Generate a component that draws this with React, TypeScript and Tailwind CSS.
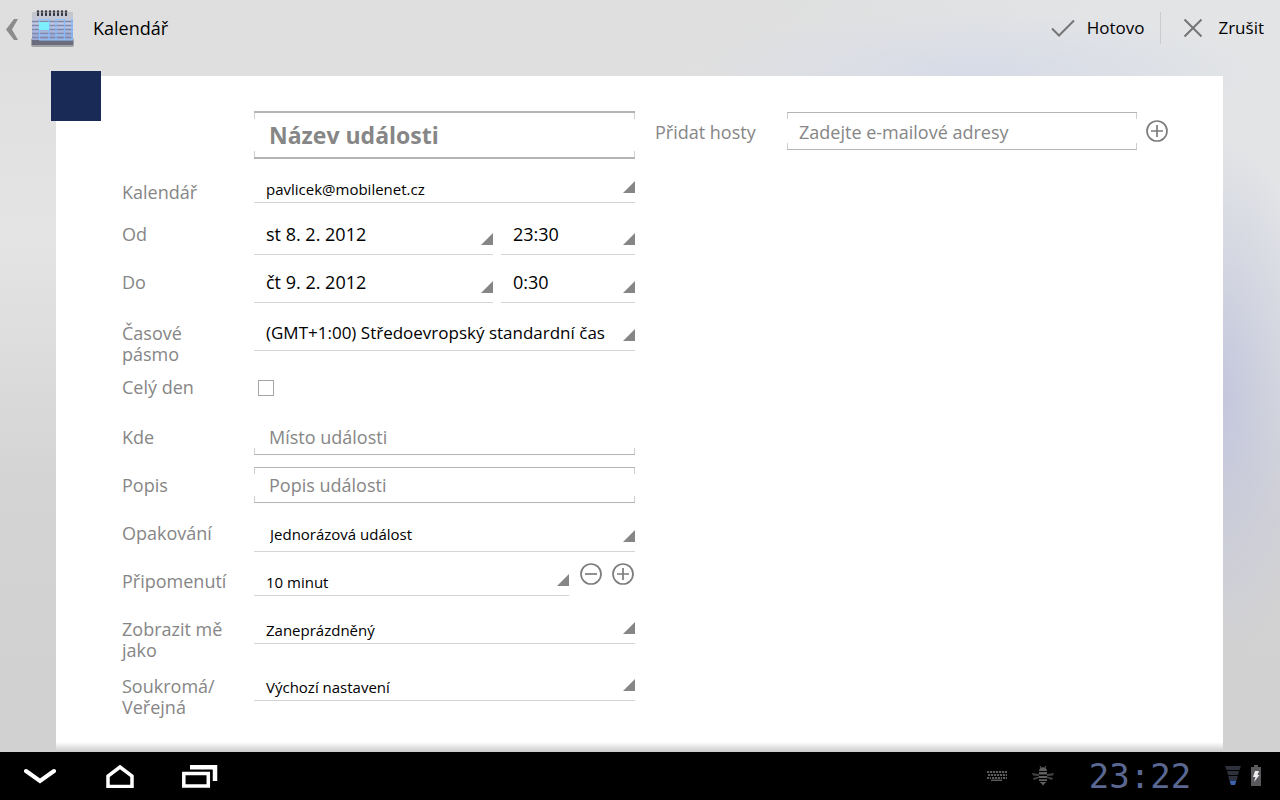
import type { ReactNode } from "react";

const Corner = () => (
    <svg className="absolute right-0 bottom-[9px] w-3 h-3 pointer-events-none" viewBox="0 0 12 12" aria-hidden="true">
        <path d="M12 0V12H0Z" fill="#868686" />
    </svg>
);

type RowProps = {
    label: string;
    htmlFor: string;
    height?: string;
    children: ReactNode;
};

const Row = ({ label, htmlFor, height = "h-12", children }: RowProps) => (
    <div className={`flex items-start ${height}`}>
        <label htmlFor={htmlFor} className="w-[132px] shrink-0 pt-2 pr-6 leading-[21px] text-[#868686]">
            {label}
        </label>
        {children}
    </div>
);

type SpinnerProps = {
    id: string;
    value: string;
    size: string;
};

const Spinner = ({ id, value, size }: SpinnerProps) => (
    <div className="relative min-w-0 flex-1 border-b border-[#d4d4d4]">
        <select id={id} className={`block w-full appearance-none bg-transparent pr-4 text-[15px] text-black outline-none ${size}`}>
            <option>{value}</option>
        </select>
        <Corner />
    </div>
);

type PickerProps = {
    id?: string;
    value: string;
    label?: string;
    className: string;
};

const Picker = ({ id, value, label, className }: PickerProps) => (
    <button id={id} type="button" aria-label={label} className={`relative border-b border-[#d4d4d4] pl-3 text-left text-black ${className}`}>
        {value}
        <Corner />
    </button>
);

type BoxProps = {
    top?: boolean;
    thick?: boolean;
    children: ReactNode;
};

const Box = ({ top = true, thick = false, children }: BoxProps) => (
    <div
        className={`relative flex-1 min-w-0 border-[#b4b4b4] ${thick ? "border-y-2" : top ? "border-y" : "border-b border-t border-t-transparent"}`}
    >
        {children}
        {top && <span className="absolute inset-x-0 top-0 h-1.5 border-x border-[#cfcfcf] pointer-events-none" />}
        <span className="absolute inset-x-0 bottom-0 h-1.5 border-x border-[#cfcfcf] pointer-events-none" />
    </div>
);

const CircleIcon = ({ plus = false }: { plus?: boolean }) => (
    <svg className="block w-[22px] h-[22px]" viewBox="0 0 22 22" fill="none" stroke="#7c7c7c" strokeWidth="1.7" aria-hidden="true">
        <circle cx="11" cy="11" r="10" />
        <path d={plus ? "M5 11H17M11 5V17" : "M5 11H17"} />
    </svg>
);

const CalendarIcon = () => (
    <svg className="w-11 h-10" viewBox="0 0 44 40" aria-hidden="true">
        <defs>
            <linearGradient id="cal-body" x1="0" y1="0" x2="0" y2="1">
                <stop offset="0" stopColor="#c4c4c8" />
                <stop offset="0.2" stopColor="#c3c8d8" />
                <stop offset="0.45" stopColor="#bccaea" />
                <stop offset="0.8" stopColor="#9aabd8" />
            </linearGradient>
        </defs>
        <rect x="0" y="30" width="43" height="9" rx="2" fill="#a2a2a6" />
        <rect x="1" y="4" width="41" height="30" rx="1" fill="url(#cal-body)" />
        <rect x="1" y="32" width="41" height="5" fill="#6a6c7e" />
        <path d="M1 13.500H42M1 17.500H42M1 21.500H42M1 25.500H42M1 29.500H42" stroke="#8287a6" strokeWidth="1.500" />
        <path d="M8.500 11V32M18 11V32M25 11V32M33.500 11V32M41 11V32" stroke="#84bcfb" strokeWidth="1.300" />
        <path d="M8 11.500H18M25 11.500H33M8 27H18M25 27H33M8 32H42" stroke="#92c8ff" strokeWidth="1.200" />
        <rect x="8" y="14" width="10" height="8" fill="#7ceefc" />
        <g fill="#3a3c4a">
            {[6, 10, 14, 18, 22, 26, 30, 34].map((x) => (
                <g key={x}>
                    <circle cx={x + 1} cy="3.500" r="1.300" />
                    <rect x={x} y="5" width="2" height="3" />
                </g>
            ))}
        </g>
    </svg>
);

const Header = () => (
    <header className="flex h-14 items-center justify-between text-black">
        <button type="button" className="flex items-center pl-[6px]">
            <svg className="w-3 h-6" viewBox="0 0 12 24" aria-hidden="true">
                <path d="M8 3H12L6 13.500L12 24H8L0 13.500Z" fill="#8b8b8b" />
            </svg>
            <span className="ml-[13px]">
                <CalendarIcon />
            </span>
            <span className="ml-[18px]">Kalendář</span>
        </button>
        <div className="flex items-center pr-4 text-[17px]">
            <button type="button" className="flex items-center gap-3 pr-4">
                <svg className="w-6 h-[18px]" viewBox="0 0 24 18" fill="none" stroke="#757575" strokeWidth="2" aria-hidden="true">
                    <path d="M1 9.500L8 16.500L23 1.500" />
                </svg>
                Hotovo
            </button>
            <button type="button" className="flex h-8 items-center gap-[15px] border-l border-[#cbcbcd] pl-[22px]">
                <svg className="w-5 h-5" viewBox="0 0 20 20" fill="none" stroke="#757575" strokeWidth="2" aria-hidden="true">
                    <path d="M1.500 1.500L18.500 18.500M18.500 1.500L1.500 18.500" />
                </svg>
                Zrušit
            </button>
        </div>
    </header>
);

const EventForm = () => (
    <form className="grid grid-cols-2 items-start gap-5 pt-[35px] pr-[55px] pb-8 pl-[66px]">
        <div>
            <div className="flex h-[63px] items-start pl-[132px]">
                <Box thick>
                    <input
                        type="text"
                        aria-label="Název události"
                        placeholder="Název události"
                        className="block h-11 w-full bg-transparent px-[15px] text-[23px] font-bold outline-none placeholder:text-[#868686]"
                    />
                </Box>
            </div>
            <Row label="Kalendář" htmlFor="calendar" height="h-[42px]">
                <Spinner id="calendar" value="pavlicek@mobilenet.cz" size="h-7 pt-0.5 pl-3" />
            </Row>
            <Row label="Od" htmlFor="from">
                <div className="flex flex-1 gap-2">
                    <Picker id="from" value="st 8. 2. 2012" className="h-[39px] flex-1 pb-0.5" />
                    <Picker value="23:30" label="Čas od 23:30" className="h-[39px] w-[134px] pb-0.5" />
                </div>
            </Row>
            <Row label="Do" htmlFor="to" height="h-[51px]">
                <div className="flex flex-1 gap-2">
                    <Picker id="to" value="čt 9. 2. 2012" className="h-[39px] flex-1 pb-0.5" />
                    <Picker value="0:30" label="Čas do 0:30" className="h-[39px] w-[134px] pb-0.5" />
                </div>
            </Row>
            <Row label="Časové pásmo" htmlFor="timezone" height="h-[54px]">
                <Picker id="timezone" value="(GMT+1:00) Středoevropský standardní čas" className="h-9 flex-1 text-[17px] whitespace-nowrap" />
            </Row>
            <Row label="Celý den" htmlFor="all-day" height="h-[50px]">
                <input id="all-day" type="checkbox" className="mt-[11px] ml-1 h-4 w-4 appearance-none border border-[#a4a4a4] bg-white checked:bg-[#868686]" />
            </Row>
            <Row label="Kde" htmlFor="where">
                <Box top={false}>
                    <input
                        id="where"
                        type="text"
                        placeholder="Místo události"
                        className="block h-[34px] w-full bg-transparent px-[15px] outline-none placeholder:text-[#868686]"
                    />
                </Box>
            </Row>
            <Row label="Popis" htmlFor="description">
                <Box>
                    <input
                        id="description"
                        type="text"
                        placeholder="Popis události"
                        className="block h-[34px] w-full bg-transparent px-[15px] outline-none placeholder:text-[#868686]"
                    />
                </Box>
            </Row>
            <Row label="Opakování" htmlFor="repeat">
                <Spinner id="repeat" value="Jednorázová událost" size="h-9 pt-0.5 pl-4" />
            </Row>
            <Row label="Připomenutí" htmlFor="reminder">
                <Spinner id="reminder" value="10 minut" size="h-8 pt-1.5 pl-3" />
                <button type="button" aria-label="Odebrat připomenutí" className="ml-[11px]">
                    <CircleIcon />
                </button>
                <button type="button" aria-label="Přidat připomenutí" className="mr-px ml-[10px]">
                    <CircleIcon plus />
                </button>
            </Row>
            <Row label="Zobrazit mě jako" htmlFor="show-as" height="h-[57px]">
                <Spinner id="show-as" value="Zaneprázdněný" size="h-8 pt-1.5 pl-3" />
            </Row>
            <Row label="Soukromá/ Veřejná" htmlFor="privacy">
                <Spinner id="privacy" value="Výchozí nastavení" size="h-8 pt-1.5 pl-3" />
            </Row>
        </div>
        <div className="flex items-center pt-px">
            <label htmlFor="guests" className="w-[132px] shrink-0 pt-0.5 text-[#868686]">
                Přidat hosty
            </label>
            <Box>
                <input
                    id="guests"
                    type="email"
                    placeholder="Zadejte e-mailové adresy"
                    className="block h-9 w-full bg-transparent px-3 pt-0.5 outline-none placeholder:text-[#868686]"
                />
            </Box>
            <button type="button" aria-label="Přidat hosta" className="ml-[9px]">
                <CircleIcon plus />
            </button>
        </div>
    </form>
);

const SystemBar = () => (
    <footer className="flex h-12 shrink-0 items-center justify-between bg-black pr-[19px] pl-6">
        <nav className="flex items-center gap-12">
            <button type="button" aria-label="Zpět">
                <svg className="block w-8 h-6" viewBox="0 0 32 24" fill="none" stroke="#fff" strokeWidth="4" aria-hidden="true">
                    <path d="M2 7L16 17L30 7" strokeLinecap="round" />
                </svg>
            </button>
            <button type="button" aria-label="Domů">
                <svg className="block w-[30px] h-6" viewBox="0 0 30 24" fill="none" stroke="#fff" strokeWidth="3.500" aria-hidden="true">
                    <path d="M4 22.500V12L16 3L28 12V22.500Z" />
                </svg>
            </button>
            <button type="button" aria-label="Poslední aplikace">
                <svg className="block w-9 h-6" viewBox="0 0 36 24" fill="none" stroke="#fff" aria-hidden="true">
                    <rect x="1.800" y="9.500" width="24.500" height="12.500" strokeWidth="3.500" />
                    <path d="M8 3.200H33V17" strokeWidth="4.500" />
                </svg>
            </button>
        </nav>
        <div className="flex items-center">
            <svg className="w-5 h-[10px]" viewBox="0 0 20 10" fill="none" stroke="#5c5c5c" strokeWidth="2" aria-hidden="true">
                <path d="M0 1H20M1 4H20M0 7H4M5 7H15M16 7H20" strokeDasharray="2.200 0.800" />
                <path d="M4 9.300H15" strokeWidth="1.400" />
            </svg>
            <svg className="ml-6 w-6 h-5" viewBox="0 0 24 20" aria-hidden="true">
                <path d="M8 8L1 7L2 9.500L8 10ZM16 8L23 7L22 9.500L16 10ZM8 10.500L2 12L3 14L8 12ZM16 10.500L22 12L21 14L16 12Z" fill="#434343" />
                <path d="M8 5C8 0 16 0 16 5ZM8 6H16V8.500H8ZM8 10H16V12H8ZM8 13.200H16V15H8ZM8.500 16H15.500L13 18L12 20L11 18Z" fill="#606060" />
                <path d="M9 0L10 2M15 0L14 2" stroke="#606060" />
            </svg>
            <time className="w-[170px] text-center font-['DejaVu_Sans_Mono',monospace] text-[34px] leading-10 text-[#5a6892]">23:22</time>
            <svg className="w-4 h-[22px]" viewBox="0 0 16 22" aria-hidden="true">
                <path d="M0 1H16L14.500 5H1.500ZM2 6H14L13 10H3ZM3.300 11H12.700L12 15H4Z" fill="#2e303b" />
                <path d="M4.500 15.500H11.500L10 20H6Z" fill="#3f62ad" />
            </svg>
            <svg className="ml-[10px] w-[10px] h-[22px]" viewBox="0 0 10 22" aria-hidden="true">
                <path d="M3 0H7V2H10V21H0V2H3Z" fill="#5a5a5e" />
                <path d="M4 6H8L6.500 10H8.500L3 17L4.500 12H2Z" fill="#eee" />
            </svg>
        </div>
    </footer>
);

const App = () => {
    return (
        <div className="flex min-h-screen flex-col bg-[radial-gradient(ellipse_110px_260px_at_95%_50%,#c3c6dd,transparent),radial-gradient(ellipse_280px_60px_at_76%_9%,#d7dbe7,transparent),radial-gradient(ellipse_600px_440px_at_100%_10%,#e2e4e6_30%,transparent),linear-gradient(to_bottom,#dedede_0%,#e4e4e4_30%,#d4d4d4_60%,#d0d0d0_100%)] font-['Open_Sans','Noto_Sans',sans-serif] text-lg leading-6">
            <Header />
            <main className="relative mt-5 mr-[57px] ml-14 flex-1 bg-white">
                <div className="absolute -top-[5px] -left-[5px] h-[50px] w-[50px] bg-[#192a56]" />
                <EventForm />
                <div className="absolute inset-x-0 bottom-0 h-[10px] bg-linear-to-b from-white to-[#cbcbcb]" />
            </main>
            <SystemBar />
        </div>
    );
};

export default App;
